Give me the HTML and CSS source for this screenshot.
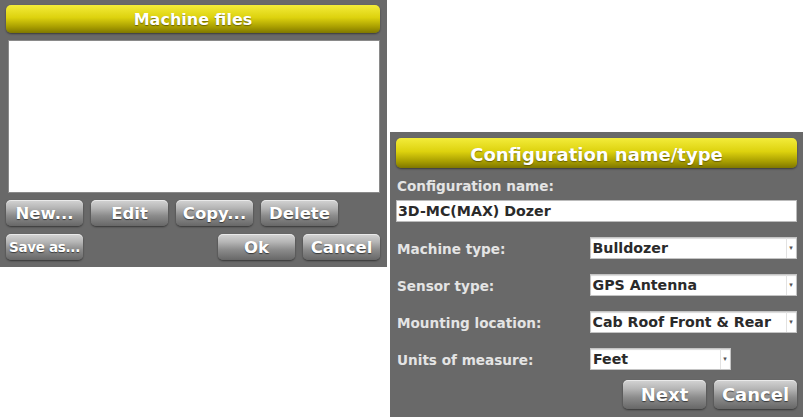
FILE: index.html
```html
<!DOCTYPE html>
<html lang="en">
<head>
    <meta charset="UTF-8">
    <title>Machine files</title>
    <link rel="stylesheet" href="styles.css">
</head>
<body>
    <div class="screens">
        <section class="panel files">
            <div class="titlebar">Machine files</div>
            <div class="filelist"></div>
            <div class="btnrow">
                <button class="btn">New...</button>
                <button class="btn">Edit</button>
                <button class="btn">Copy...</button>
                <button class="btn">Delete</button>
            </div>
            <div class="btnrow">
                <button class="btn small">Save as...</button>
                <span class="spacer"></span>
                <button class="btn">Ok</button>
                <button class="btn">Cancel</button>
            </div>
        </section>

        <section class="panel config">
            <div class="titlebar big">Configuration name/type</div>
            <label class="lbl top">Configuration name:</label>
            <div class="textbox">3D-MC(MAX) Dozer</div>
            <div class="field">
                <label class="lbl">Machine type:</label>
                <div class="dropdown">Bulldozer<span class="arrow">&#9662;</span></div>
            </div>
            <div class="field">
                <label class="lbl">Sensor type:</label>
                <div class="dropdown">GPS Antenna<span class="arrow">&#9662;</span></div>
            </div>
            <div class="field">
                <label class="lbl">Mounting location:</label>
                <div class="dropdown">Cab Roof Front &amp; Rear<span class="arrow">&#9662;</span></div>
            </div>
            <div class="field">
                <label class="lbl">Units of measure:</label>
                <div class="dropdown short">Feet<span class="arrow">&#9662;</span></div>
            </div>
            <div class="btnrow end">
                <button class="btn big">Next</button>
                <button class="btn big">Cancel</button>
            </div>
        </section>
    </div>
</body>
</html>
```

FILE: styles.css
```css
:root {
    --panel: #696969;
    --label: #e4e4e4;
    --ink: #2a2a2a;
}
body {
    margin: 0;
    background: #fff;
    font-family: 'DejaVu Sans', Verdana, sans-serif;
    font-weight: bold;
}
.screens {
    display: flex;
    align-items: flex-start;
    gap: 3px;
    width: 803px;
    height: 417px;
    overflow: hidden;
}
.panel {
    background: var(--panel);
    box-sizing: border-box;
    display: flex;
    flex-direction: column;
}
.files {
    width: 387px;
    height: 267px;
    padding: 5px 7px 0 6px;
}
.config {
    width: 413px;
    height: 285px;
    margin-top: 132px;
    padding: 6px 6px 0 6px;
}
.titlebar {
    height: 28px;
    border-radius: 5px;
    background: linear-gradient(#f3ec3a 0%, #ddd20e 45%, #a59b00 80%, #7f7700 100%);
    box-shadow: 0 1px 2px rgba(0,0,0,0.45);
    color: #fff;
    text-align: center;
    font-size: 16px;
    line-height: 29px;
    text-shadow: 0 1px 1px rgba(60,55,0,0.6);
}
.titlebar.big {
    height: 30px;
    font-size: 18px;
    line-height: 33px;
}
.filelist {
    height: 153px;
    margin: 7px 0 0 2px;
    background: #fff;
    border: 1px solid #8a8a8a;
    box-sizing: border-box;
}
.btnrow {
    display: flex;
    gap: 8px;
    margin-top: 7px;
}
.btnrow + .btnrow {
    margin-top: 8px;
}
.spacer {
    flex: 1;
}
.btn {
    width: 77px;
    height: 26px;
    padding: 0;
    border: none;
    border-radius: 5px;
    background: linear-gradient(#d4d4d4 0%, #b6b6b6 30%, #8c8c8c 60%, #676767 100%);
    box-shadow: 0 1px 2px rgba(0,0,0,0.5), inset 0 1px 0 rgba(255,255,255,0.5);
    color: #fff;
    font-family: inherit;
    font-weight: bold;
    font-size: 16.5px;
    text-shadow: 0 1px 1px rgba(0,0,0,0.55);
}
.btn.small {
    font-size: 13.5px;
    letter-spacing: -0.3px;
}
.btn.big {
    width: 83px;
    height: 29px;
    font-size: 18px;
}
.lbl {
    color: var(--label);
    font-size: 13.6px;
}
.lbl.top {
    margin: 10px 0 0 1px;
    height: 17px;
}
.textbox {
    height: 22px;
    margin-top: 5px;
    box-sizing: border-box;
    background: #fff;
    border: 1px solid #bbb;
    color: var(--ink);
    font-size: 14.2px;
    line-height: 21px;
    padding-left: 1px;
}
.field {
    display: flex;
    align-items: center;
    height: 22px;
    margin-top: 15px;
}
.field + .field {
    margin-top: 15px;
}
.field .lbl {
    width: 193px;
    padding-left: 1px;
    margin-top: 2px;
}
.dropdown {
    position: relative;
    width: 208px;
    height: 22px;
    box-sizing: border-box;
    background: #fff;
    border: 1px solid #c4c4c4;
    box-shadow: inset 0 1px 1px rgba(0,0,0,0.15);
    color: var(--ink);
    font-size: 14.2px;
    line-height: 21px;
    padding-left: 2px;
}
.dropdown.short {
    width: 141px;
}
.arrow {
    position: absolute;
    right: 1px;
    top: 0;
    width: 8px;
    height: 20px;
    border-left: 1px solid #e2e2e2;
    font-size: 7px;
    line-height: 20px;
    text-align: center;
    color: #555;
}
.btnrow.end {
    justify-content: flex-end;
    margin-top: 10px;
    gap: 8px;
}
```
